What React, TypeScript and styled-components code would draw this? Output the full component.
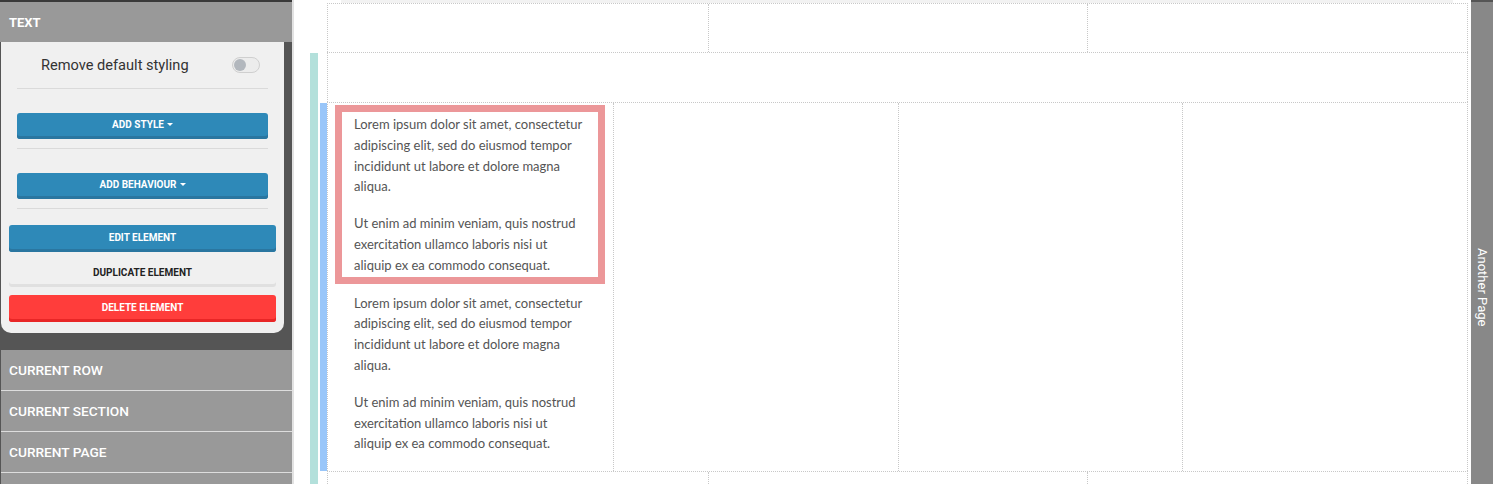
import React from "react"
import styled, { createGlobalStyle } from "styled-components"

const GlobalStyle = createGlobalStyle`
  html, body {
    margin: 0;
    padding: 0;
    background: #fff;
    font-family: Roboto, "Liberation Sans", sans-serif;
  }
  * { box-sizing: border-box; }
`

const Page = styled.div`
  display: flex;
  height: 484px;
  overflow: hidden;
`

const Sidebar = styled.aside`
  width: 292px;
  flex-shrink: 0;
  display: flex;
  flex-direction: column;
  overflow: hidden;
  background: #555;
  border-top: 2px solid #3a3a3a;
  padding-left: 1px;

  & > * {
    flex-shrink: 0;
  }
`

const PanelTitle = styled.div`
  height: 40px;
  display: flex;
  align-items: center;
  padding-left: 9px;
  margin-left: -1px;
  background: #999;
  color: #fff;
  font-size: 13px;
  font-weight: 700;
`

const Card = styled.div`
  margin-right: 8px;
  background: #f0f0f0;
  border-radius: 0 0 10px 10px;
  padding: 0 8px 11px;
  display: flex;
  flex-direction: column;
`

const Group = styled.div`
  margin: 0 8px;
  display: flex;
  flex-direction: column;
`

const ToggleRow = styled.div`
  height: 47px;
  display: flex;
  align-items: center;
  justify-content: space-between;
  padding: 0 8px 0 24px;
  border-bottom: 1px solid #dadada;
  color: #333;
  font-size: 14.6px;
`

const Switch = styled.span`
  width: 28px;
  height: 16px;
  border-radius: 8px;
  background: #ececec;
  border: 1px solid #cfcfcf;
  position: relative;

  &:after {
    content: "";
    position: absolute;
    left: 1px;
    top: 1px;
    width: 12px;
    height: 12px;
    border-radius: 50%;
    background: #b2b7bd;
  }
`

const Divided = styled.div`
  padding: 24px 0 9px;
  border-bottom: 1px solid #dadada;
`

type Tone = "blue" | "plain" | "red"

const tones: { [t in Tone]: [string, string, string] } = {
  blue: ["#2e89b8", "#2a76a0", "#fff"],
  plain: ["#f0f0f0", "#e0e0e0", "#222"],
  red: ["#ff3d3b", "#e82626", "#fff"],
}

const Button = styled.button<{ $tone: Tone; $tall?: boolean }>`
  width: 100%;
  height: ${p => (p.$tall ? 27 : 26)}px;
  border: none;
  border-radius: 3px;
  padding: 0 0 3px;
  background: ${p => tones[p.$tone][0]};
  box-shadow: inset 0 -3px 0 ${p => tones[p.$tone][1]};
  color: ${p => tones[p.$tone][2]};
  font-family: Roboto, "Liberation Sans", sans-serif;
  font-size: 10px;
  font-weight: 700;
  text-transform: uppercase;
  display: flex;
  align-items: center;
  justify-content: center;
  gap: 3px;
`

const Caret = styled.span`
  width: 0;
  height: 0;
  border-left: 3px solid transparent;
  border-right: 3px solid transparent;
  border-top: 3px solid #fff;
`

const Actions = styled.div`
  display: flex;
  flex-direction: column;
  gap: 8px;
  margin-top: 16px;
`

const Spacer = styled.div`
  height: 17px;
`

const NavItem = styled.div`
  height: 41px;
  display: flex;
  align-items: center;
  padding-left: 8px;
  background: #999;
  border-bottom: 1px solid #ddd;
  color: #fff;
  font-size: 13.7px;
  font-weight: 500;
`

const Canvas = styled.main`
  flex: 1;
  border-left: 2px solid #e2e2e2;
  padding: 0 3px 0 16px;
  display: flex;
  flex-direction: column;
`

const TopStrip = styled.div`
  height: 3px;
  margin: 0 15px 0 31px;
  background: #f2f2f2;
`

const Cells = styled.div<{ $cols: number; $height?: number }>`
  flex: 1 1 auto;
  min-width: 0;
  display: grid;
  grid-template-columns: repeat(${p => p.$cols}, 1fr);
  border: 1px dotted #c8c8c8;
  border-bottom: none;
  min-height: ${p => p.$height ?? 0}px;
`

const Cell = styled.div`
  padding: 2px 8px 8px 7px;
  & + & {
    border-left: 1px dotted #c8c8c8;
  }
`

const LooseRow = styled.div`
  display: flex;
  margin-left: 17px;
`

const Section = styled.section`
  flex: 1;
  display: flex;
`

const SectionBar = styled.div`
  flex: 0 0 8px;
  margin-top: 1px;
  background: #b3e0db;
`

const SectionBody = styled.div`
  flex: 1;
  margin-left: 2px;
  display: flex;
  flex-direction: column;
`

const Row = styled.div<{ $grow?: boolean }>`
  display: flex;
  flex: ${p => (p.$grow ? 1 : "none")};
`

const RowBar = styled.div<{ $active?: boolean }>`
  flex: 0 0 7px;
  margin-top: 1px;
  background: ${p => (p.$active ? "#99c6f9" : "transparent")};
`

const TextBlock = styled.div<{ $selected?: boolean }>`
  border: 7px solid ${p => (p.$selected ? "#ec9799" : "transparent")};
  padding: 2px 13px 1px 12px;
  font-family: Lato, "Open Sans", sans-serif;
  font-size: 13px;
  line-height: 20.8px;
  color: #555;

  p {
    margin: 0;
  }
  p + p {
    margin-top: 16px;
  }
`

const PageTab = styled.div`
  width: 22px;
  flex-shrink: 0;
  background: #888;
  border-top: 2px solid #555;
  display: flex;
  justify-content: center;
  padding-top: 246px;
`

const TabLabel = styled.span`
  writing-mode: vertical-rl;
  color: #fff;
  font-size: 13px;
`

const Lorem = () => (
  <>
    <p>Lorem ipsum dolor sit amet, consectetur adipiscing elit, sed do eiusmod tempor incididunt ut labore et dolore magna aliqua.</p>
    <p>Ut enim ad minim veniam, quis nostrud exercitation ullamco laboris nisi ut aliquip ex ea commodo consequat.</p>
  </>
)

const navItems = ["Current Row", "Current Section", "Current Page", ""]

export default function App() {
  return (
    <Page>
      <GlobalStyle />
      <Sidebar>
        <PanelTitle>TEXT</PanelTitle>
        <Card>
          <Group>
            <ToggleRow>
              Remove default styling
              <Switch />
            </ToggleRow>
            <Divided>
              <Button $tone="blue">Add style <Caret /></Button>
            </Divided>
            <Divided>
              <Button $tone="blue">Add behaviour <Caret /></Button>
            </Divided>
          </Group>
          <Actions>
            <Button $tone="blue" $tall>Edit element</Button>
            <Button $tone="plain" $tall>Duplicate element</Button>
            <Button $tone="red" $tall>Delete element</Button>
          </Actions>
        </Card>
        <Spacer />
        {navItems.map(item => (
          <NavItem key={item}>{item.toUpperCase()}</NavItem>
        ))}
      </Sidebar>

      <Canvas>
        <TopStrip />
        <LooseRow>
          <Cells $cols={3} $height={49}>
            <Cell />
            <Cell />
            <Cell />
          </Cells>
        </LooseRow>
        <Section>
          <SectionBar />
          <SectionBody>
            <Row>
              <RowBar />
              <Cells $cols={1} $height={50}>
                <Cell />
              </Cells>
            </Row>
            <Row>
              <RowBar $active />
              <Cells $cols={4} $height={369}>
                <Cell>
                  <TextBlock $selected><Lorem /></TextBlock>
                  <TextBlock><Lorem /></TextBlock>
                </Cell>
                <Cell />
                <Cell />
                <Cell />
              </Cells>
            </Row>
            <Row $grow>
              <RowBar />
              <Cells $cols={3}>
                <Cell />
                <Cell />
                <Cell />
              </Cells>
            </Row>
          </SectionBody>
        </Section>
      </Canvas>

      <PageTab>
        <TabLabel>Another Page</TabLabel>
      </PageTab>
    </Page>
  )
}
